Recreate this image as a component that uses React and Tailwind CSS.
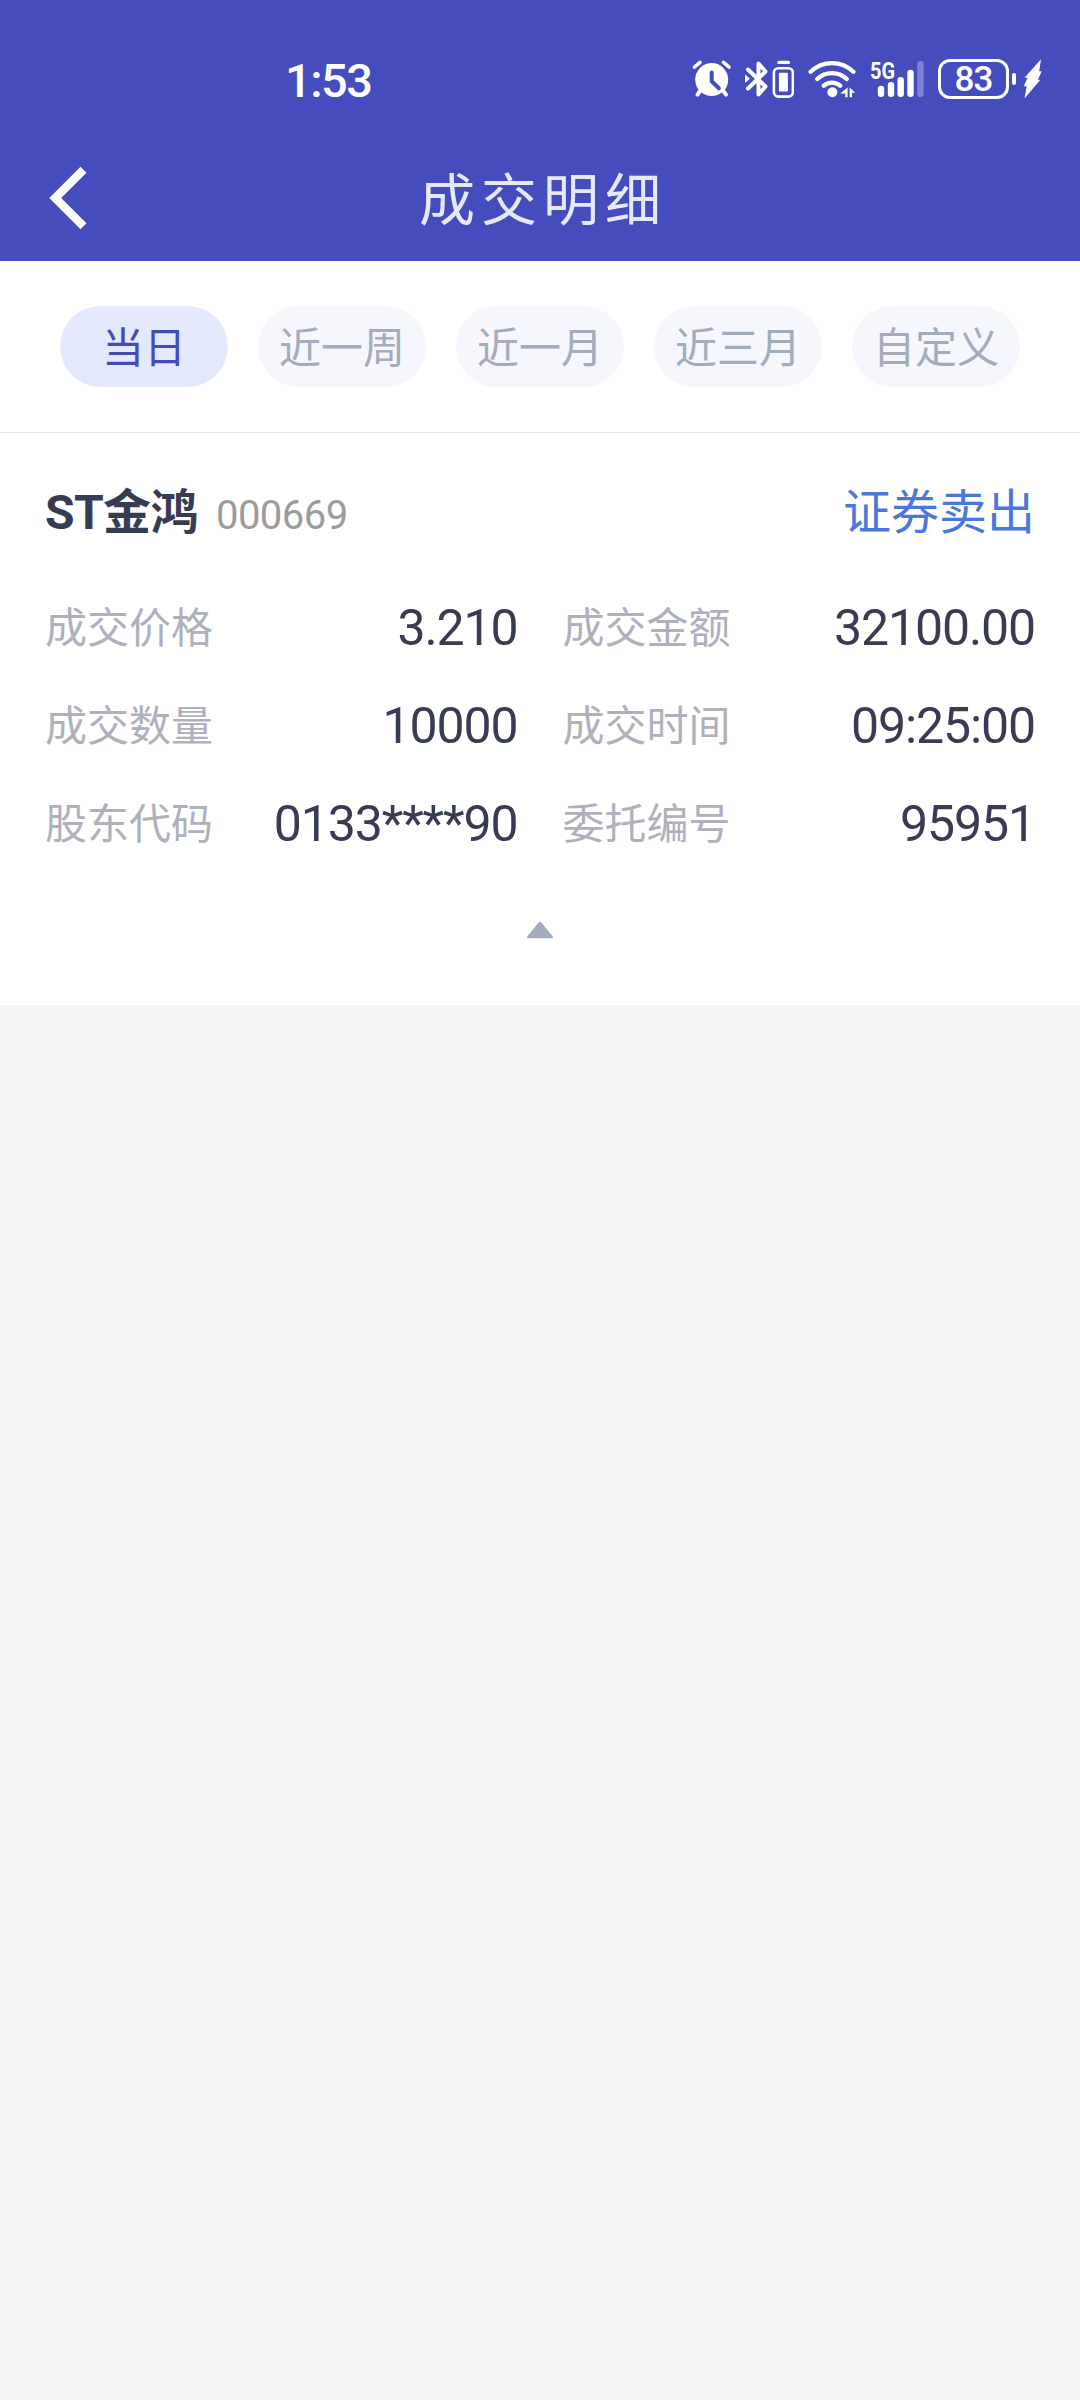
import clsx from "clsx";

const TABS = ["当日", "近一周", "近一月", "近三月", "自定义"];

const DETAILS = [
  { label: "成交价格", value: "3.210" },
  { label: "成交金额", value: "32100.00" },
  { label: "成交数量", value: "10000" },
  { label: "成交时间", value: "09:25:00" },
  { label: "股东代码", value: "0133****90" },
  { label: "委托编号", value: "95951" },
];

function AlarmIcon() {
  return (
    <svg width="40" height="40" viewBox="0 0 40 40" fill="none" stroke="#fff" strokeLinecap="round">
      <path d="M2.5 8 8 3.3M31.500 3.300 37 8" strokeWidth="3.6" />
      <path d="M8 32 5.5 35.700M31.500 32l2.500 3.700" strokeWidth="4" />
      <circle cx="19.7" cy="20.6" r="16.500" fill="#fff" stroke="none" />
      <path d="M19.700 13.500v8.800l7.200 7" stroke="#444cbe" strokeWidth="4" strokeLinejoin="round" />
    </svg>
  );
}

function BluetoothIcon() {
  return (
    <svg width="50" height="40" viewBox="0 0 50 40" fill="none" stroke="#fff">
      <path
        d="M4 10.500 21.500 27.500 14.500 35.500V4.500l7 8L4 29.500"
        strokeWidth="4"
        strokeLinecap="round"
        strokeLinejoin="round"
      />
      <path d="M1 15.500 6 19.700 1 24z" fill="#fff" stroke="none" />
      <rect x="29.900" y="9.200" width="19" height="28.400" rx="4.500" strokeWidth="2.600" />
      <rect x="34.900" y="13.800" width="9" height="18.800" rx="1" fill="#fff" stroke="none" />
      <path d="M35 3.400h9.400" strokeWidth="3.400" strokeLinecap="round" />
    </svg>
  );
}

function WifiIcon() {
  return (
    <svg width="48" height="40" viewBox="0 0 48 40" fill="none" stroke="#fff">
      <path
        d="M2.600 12.800C14.500 1.200 33.500 1.200 45.400 12.800M9.300 20c8.400-7.800 21-7.800 29.400 0M15.800 26.700c4.600-4.200 11.800-4.200 16.400 0"
        strokeWidth="4.300"
        strokeLinecap="round"
      />
      <circle cx="24.400" cy="33.300" r="5" fill="#fff" stroke="none" />
      <path d="M39.600 28.500v9.800h-2.400v-3.800h-5zM41.600 28.500l5.800 5.200h-3.400v4.600h-2.400z" fill="#fff" stroke="none" />
    </svg>
  );
}

function SignalIcon() {
  return (
    <svg className="overflow-visible" width="54" height="40" viewBox="0 0 54 40" fill="#fff">
      <text
        x="0"
        y="20"
        fontFamily="Roboto, sans-serif"
        fontSize="24"
        fontWeight="700"
        textLength="25"
        lengthAdjust="spacingAndGlyphs"
      >
        5G
      </text>
      <rect x="7.800" y="26.700" width="6.400" height="11.300" rx="3" />
      <rect x="17.800" y="23" width="6.400" height="15" rx="3" />
      <rect x="27.500" y="18" width="6.400" height="20" rx="3" />
      <rect x="37.300" y="10.700" width="6.400" height="27.300" rx="3" />
      <rect x="47.200" y="2" width="6.400" height="36" rx="3" opacity="0.300" />
    </svg>
  );
}

function Battery() {
  return (
    <div className="flex items-center">
      <div className="flex h-10 w-[71px] items-center justify-center rounded-[12px] border-3 border-white text-[35px] leading-none font-medium tracking-[-1px] text-white">
        83
      </div>
      <div className="ml-[3px] h-3 w-[4px] rounded-[2px] bg-white" />
      <svg className="ml-[7px]" width="19" height="40" viewBox="0 0 19 40" fill="#fff">
        <path d="M18 .3 16.200 12.300h2.500L14.900 20.800h2.500L1.500 39.600l2.200-12.300H.8L4.600 18.800H1.500z" />
      </svg>
    </div>
  );
}

function StatusBar() {
  return (
    <div className="flex h-[137px] items-start justify-between pt-[59px] pr-[38px] pl-[285px] text-white">
      <span className="mt-[-1px] text-[47px] leading-[46px] font-medium tracking-[-1.5px]">1:53</span>
      <div className="flex items-start">
        <AlarmIcon />
        <div className="ml-[12px]">
          <BluetoothIcon />
        </div>
        <div className="ml-[14px]">
          <WifiIcon />
        </div>
        <div className="ml-[14px]">
          <SignalIcon />
        </div>
        <div className="ml-[14px]">
          <Battery />
        </div>
      </div>
    </div>
  );
}

function TitleBar() {
  return (
    <div className="grid h-[124px] grid-cols-[1fr_auto_1fr] items-center">
      <button type="button" className="mb-[2px] ml-12">
        <svg width="40" height="64" viewBox="0 0 40 64" fill="none" stroke="#fff" strokeWidth="8.4">
          <path d="M35.500 3.700 7.200 32l28.300 28.300" />
        </svg>
      </button>
      <h1 className="mr-[-6px] pt-[4px] text-[56px] leading-none tracking-[6px] text-[#e8e9f6]">
        成交明细
      </h1>
    </div>
  );
}

function Detail({ label, value }) {
  return (
    <div className="flex h-[98px] items-center justify-between">
      <span className="pt-[2px] text-[42px] text-[#aeb1bb]">{label}</span>
      <span className="pt-[2px] text-[50px] tracking-[-1.1px] text-[#373c53]">{value}</span>
    </div>
  );
}

export default function App() {
  return (
    <div className="min-h-[2400px] w-[1080px] bg-[#f3f5f7] font-[Roboto,'Noto_Sans_CJK_SC',sans-serif]">
      <header className="bg-[#444cbe]">
        <StatusBar />
        <TitleBar />
      </header>

      <nav className="flex h-[172px] gap-[30px] border-b border-[#e3e3e3] bg-white px-[60px] pt-[45px]">
        {TABS.map((tab, i) => (
          <button
            key={tab}
            type="button"
            className={clsx(
              "flex h-[81px] flex-1 items-center justify-center rounded-full pt-[4px] text-[42px] leading-none",
              i === 0 ? "bg-[#e5e9fe] text-[#444cb4]" : "bg-[#f6f7fc] text-[#a3acbd]"
            )}
          >
            {tab}
          </button>
        ))}
      </nav>

      <section className="h-[572px] bg-white px-[45px] pt-[45px]">
        <div className="flex h-[70px] items-center justify-between">
          <div className="flex items-baseline gap-[18px]">
            <span className="text-[48px] font-bold tracking-[-0.6px] text-[#373c53]">ST金鸿</span>
            <span className="text-[40px] tracking-[-0.5px] text-[#9b9b9b]">000669</span>
          </div>
          <span className="text-[48px] text-[#4a77dc]">证券卖出</span>
        </div>
        <div className="mt-[30px] grid grid-cols-2 gap-x-[45px]">
          {DETAILS.map((item) => (
            <Detail key={item.label} {...item} />
          ))}
        </div>
        <svg className="mx-auto mt-[49px]" width="28" height="18" viewBox="0 0 28 18" fill="#a3acbd">
          <path d="M12.800 1.200a1.800 1.800 0 0 1 2.400 0l11.400 14.100c.9.9.500 2-.7 2H2.100c-1.200 0-1.600-1.100-.7-2z" />
        </svg>
      </section>
    </div>
  );
}
